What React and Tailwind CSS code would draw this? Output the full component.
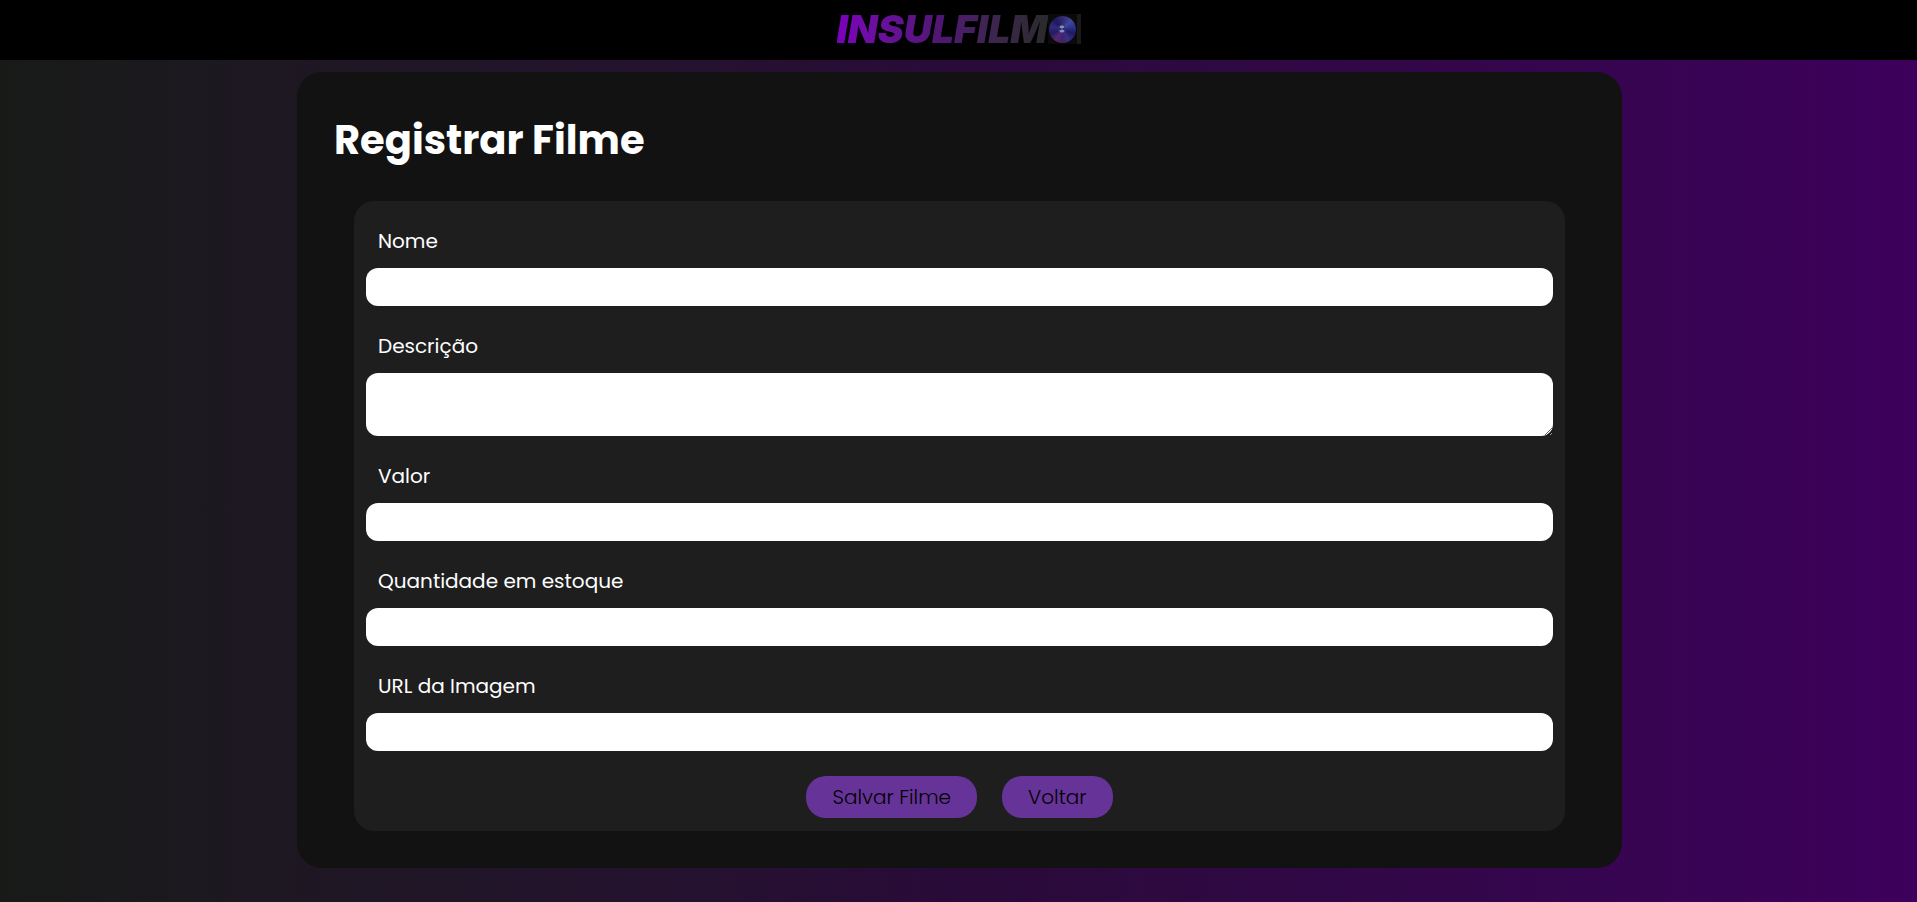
import React from "react";

function Disc() {
  return (
    <span aria-hidden="true" className="flex h-[30px] items-center bg-[#0a0a0a] pl-px">
      <span className="flex h-[27px] w-[27px] items-center justify-center rounded-full bg-[conic-gradient(#33296f,#41479a_45deg,#2b2f88_80deg,#1c1c62_110deg,#3a2f80_150deg,#40226c_180deg,#54286f_215deg,#231b62_250deg,#2f2a7c_285deg,#1d1a5c_320deg,#33296f)]">
        <svg viewBox="0 0 10 10" className="h-[10px] w-[10px]">
          <circle cx="5" cy="5" r="4" fill="#3f3d8c" />
          <path d="M3 2h4v2H3zM3 6h4v2H3z" fill="#8286bb" />
          <path d="M1 4.5h8v1H1z" fill="#1d1a55" />
          <path d="M4.5 1h1v8h-1z" fill="#a5a8cf" opacity="0.6" />
        </svg>
      </span>
      <span className="ml-px h-[30px] w-1 bg-[#1a1a1a]" />
    </span>
  );
}

const inputClass = "block w-full rounded-xl bg-white px-3 text-base text-black outline-none";

function Field({ id, label, type = "text", multiline = false }) {
  return (
    <div>
      <label htmlFor={id} className="block px-3 pt-[25px] pb-[11px] text-[20px] leading-[31px]">
        {label}
      </label>
      {multiline ? (
        <textarea id={id} name={id} className={`${inputClass} h-[63px] resize`} />
      ) : (
        <input id={id} name={id} type={type} className={`${inputClass} h-[38px]`} />
      )}
    </div>
  );
}

const buttonClass = "h-[42px] rounded-[20px] bg-[#663399] px-[26px] text-[20px] font-light text-black";

export default function App() {
  return (
    <div className="min-h-screen bg-linear-to-r from-[#181a18] via-[#290a38] to-[#3d005c] font-['Poppins','Inter',sans-serif] text-white">
      <header className="flex h-[60px] items-center justify-center bg-black pb-[2px]">
        <a href="#" aria-label="Insulfilmo" className="flex items-center">
          <span className="bg-linear-to-r from-[#7c00bc] via-[#501672] to-[#2a2a2a] bg-clip-text font-['Inter',sans-serif] text-[39px] leading-[58px] font-black text-transparent italic">
            INSULFILM
          </span>
          <Disc />
        </a>
      </header>
      <main className="pt-3 pr-[295px] pb-[34px] pl-[297px]">
        <section className="rounded-[25px] bg-[#121212] p-[37px]">
          <h1 className="text-[40px] leading-[62px] font-bold">Registrar Filme</h1>
          <form className="mx-5 mt-[30px] rounded-[20px] bg-[#1e1e1e] px-3 pb-[13px]">
            <Field id="nome" label="Nome" />
            <Field id="descricao" label="Descrição" multiline />
            <Field id="valor" label="Valor" />
            <Field id="quantidade" label="Quantidade em estoque" />
            <Field id="imagem" label="URL da Imagem" type="url" />
            <div className="flex justify-center gap-[25px] pt-[25px]">
              <button type="submit" className={buttonClass}>Salvar Filme</button>
              <button type="button" className={buttonClass}>Voltar</button>
            </div>
          </form>
        </section>
      </main>
    </div>
  );
}
